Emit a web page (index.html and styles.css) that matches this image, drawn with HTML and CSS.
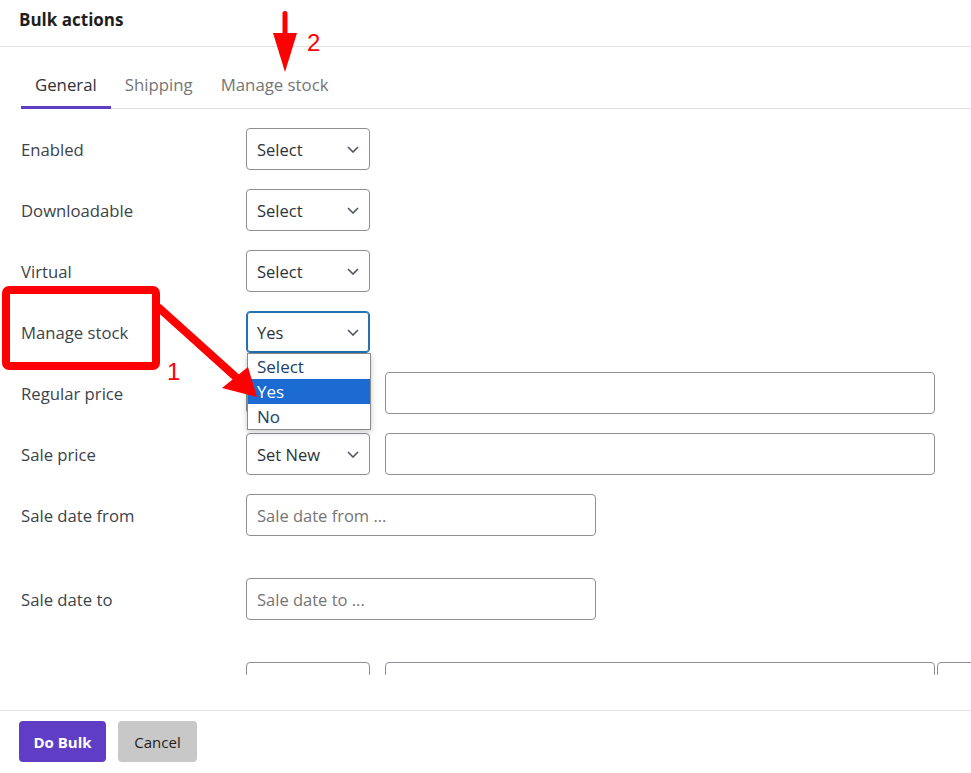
FILE: index.html
```html
<!DOCTYPE html>
<html>
<head>
<meta charset="utf-8">
<title>Bulk actions</title>
<link rel="stylesheet" href="styles.css">
</head>
<body>
<div class="modal">
  <header class="modal-head"><h2 class="modal-title">Bulk actions</h2></header>
  <nav class="tabs">
    <a class="tab active">General</a>
    <a class="tab">Shipping</a>
    <a class="tab">Manage stock</a>
  </nav>
  <div class="modal-body">
    <div class="row">
      <label class="label">Enabled</label>
      <div class="select"><span>Select</span><svg class="chev" viewBox="0 0 12 7"><path d="M1 1l5 5 5-5"/></svg></div>
    </div>
    <div class="row">
      <label class="label">Downloadable</label>
      <div class="select"><span>Select</span><svg class="chev" viewBox="0 0 12 7"><path d="M1 1l5 5 5-5"/></svg></div>
    </div>
    <div class="row">
      <label class="label">Virtual</label>
      <div class="select"><span>Select</span><svg class="chev" viewBox="0 0 12 7"><path d="M1 1l5 5 5-5"/></svg></div>
    </div>
    <div class="row">
      <label class="label">Manage stock</label>
      <div class="select focused"><span>Yes</span><svg class="chev" viewBox="0 0 12 7"><path d="M1 1l5 5 5-5"/></svg>
        <ul class="dropdown">
          <li class="opt">Select</li>
          <li class="opt hl">Yes</li>
          <li class="opt">No</li>
        </ul>
      </div>
    </div>
    <div class="row">
      <label class="label">Regular price</label>
      <div class="select"><span>Set New</span><svg class="chev" viewBox="0 0 12 7"><path d="M1 1l5 5 5-5"/></svg></div>
      <div class="input wide"></div>
    </div>
    <div class="row">
      <label class="label">Sale price</label>
      <div class="select"><span>Set New</span><svg class="chev" viewBox="0 0 12 7"><path d="M1 1l5 5 5-5"/></svg></div>
      <div class="input wide"></div>
    </div>
    <div class="row date-row">
      <label class="label">Sale date from</label>
      <div class="input date"><span class="ph">Sale date from ...</span></div>
    </div>
    <div class="row date-row">
      <label class="label">Sale date to</label>
      <div class="input date"><span class="ph">Sale date to ...</span></div>
    </div>
    <div class="row">
      <label class="label"></label>
      <div class="select"><span></span></div>
      <div class="input wide"></div>
      <div class="input extra"></div>
    </div>
  </div>
  <footer class="modal-foot">
    <button class="btn primary">Do Bulk</button>
    <button class="btn secondary">Cancel</button>
  </footer>
  <svg class="annot" viewBox="0 0 971 773" width="971" height="773">
    <rect x="6" y="290" width="150" height="76" rx="3" fill="none" stroke="#ff0000" stroke-width="8"/>
    <line x1="158" y1="307" x2="238" y2="379" stroke="#ff0000" stroke-width="8"/>
    <polygon points="257,397 222,388 248,367" fill="#ff0000"/>
    <rect x="282.5" y="11" width="5" height="26" rx="2.5" fill="#ff0000"/>
    <polygon points="273,33 297,33 285,72" fill="#ff0000"/>
    <text x="167" y="380" class="num">1</text>
    <text x="307" y="51" class="num">2</text>
  </svg>
</div>
</body>
</html>
```
FILE: styles.css
```css
* { box-sizing: border-box; }
html, body { margin: 0; padding: 0; background: #fff; }
body {
  font-family: "Open Sans", "Noto Sans", "Liberation Sans", sans-serif;
  color: #3c434a;
  width: 971px;
  height: 773px;
  overflow: hidden;
}
.modal { position: relative; width: 971px; height: 773px; display: flex; flex-direction: column; }

.modal-head {
  height: 47px;
  flex-shrink: 0;
  border-bottom: 1px solid #e2e2e2;
  padding: 8px 19px 0;
}
.modal-title {
  margin: 0;
  font-size: 17px;
  line-height: 24px;
  font-weight: 700;
  color: #1e1e1e;
}

.tabs {
  display: flex;
  flex-shrink: 0;
  margin-left: 21px;
  height: 62px;
  border-bottom: 1px solid #e2e2e2;
}
.tab {
  padding: 26px 14px 8px;
  line-height: 24px;
  font-size: 16.8px;
  color: #757575;
  border-bottom: 3px solid transparent;
  height: 62px;
}
.tab.active { color: #2c3338; border-bottom-color: #5f3dc4; }

.modal-body {
  height: 566px;
  flex-shrink: 0;
  overflow: hidden;
  padding: 19px 0 0 21px;
  display: flex;
  flex-direction: column;
  gap: 19px;
}
.row {
  display: flex;
  align-items: center;
  height: 42px;
  flex-shrink: 0;
}
.date-row { margin-bottom: 23px; }
.label {
  width: 225px;
  flex-shrink: 0;
  font-size: 16.7px;
  color: #3c434a;
}

.select {
  position: relative;
  width: 124px;
  height: 42px;
  flex-shrink: 0;
  border: 1px solid #8c8f94;
  border-radius: 4px;
  display: flex;
  align-items: center;
  justify-content: space-between;
  padding: 0 10px 0 10px;
  font-size: 16.5px;
  color: #2c3338;
}
.select.focused {
  border-color: #2271b1;
  box-shadow: inset 0 0 0 1px #2271b1;
}
.chev {
  width: 12px;
  height: 7px;
  fill: none;
  stroke: #50575e;
  stroke-width: 1.6;
}

.dropdown {
  position: absolute;
  top: 41px;
  left: 0;
  width: 124px;
  margin: 0;
  padding: 0;
  list-style: none;
  background: #fff;
  border: 1px solid #8a8a8a;
  box-shadow: 0 2px 6px rgba(0,0,0,0.22);
  z-index: 5;
}
.opt {
  height: 25px;
  line-height: 25px;
  padding-left: 9px;
  font-size: 17px;
  color: #21406b;
}
.opt.hl { background: #1b6bd3; color: #fff; }

.input {
  height: 42px;
  border: 1px solid #8c8f94;
  border-radius: 4px;
  flex-shrink: 0;
  display: flex;
  align-items: center;
  padding: 0 10px;
  background: #fff;
}
.input.wide { width: 550px; margin-left: 15px; }
.input.date { width: 350px; }
.input.extra { width: 60px; margin-left: 2px; }
.ph { font-size: 16.5px; color: #757575; }

.modal-foot {
  margin-top: auto;
  border-top: 1px solid #e2e2e2;
  height: 63px;
  padding: 10px 19px 0;
  display: flex;
  gap: 12px;
  align-items: flex-start;
}
.btn {
  height: 41px;
  border: 0;
  border-radius: 4px;
  font-family: "Open Sans", "Noto Sans", sans-serif;
  font-size: 15px;
  padding: 0;
}
.btn.primary { width: 87px; background: #5f3dc4; color: #fff; font-weight: 700; }
.btn.secondary { width: 79px; background: #c8c8c8; color: #1e1e1e; font-weight: 500; }

.annot {
  position: absolute;
  top: 0;
  left: 0;
  pointer-events: none;
  z-index: 10;
}
.num {
  font-family: "Liberation Sans", sans-serif;
  font-size: 24px;
  fill: #ff0000;
}
```
